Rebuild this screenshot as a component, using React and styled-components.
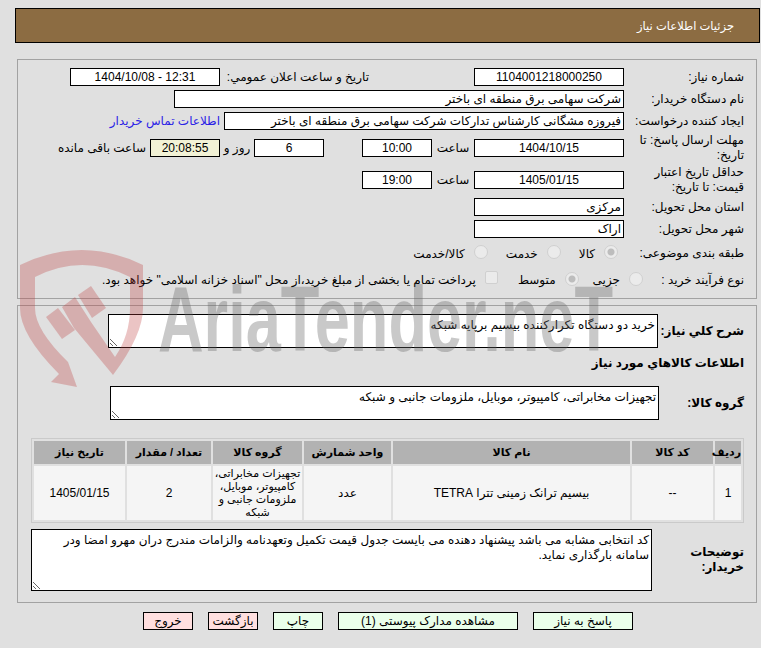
import React from "react";
import styled, { createGlobalStyle } from "styled-components";

const GlobalStyle = createGlobalStyle`
  html, body {
    margin: 0;
    padding: 0;
    background: #e0e0e0;
  }
  body {
    font-family: "Liberation Sans", "DejaVu Sans", sans-serif;
    font-size: 12px;
    color: #000;
    overflow: hidden;
  }
`;

const Page = styled.div`
  position: relative;
  width: 761px;
  height: 648px;
  padding-top: 8px;
  box-sizing: border-box;
  direction: rtl;
`;

const Header = styled.div`
  box-sizing: border-box;
  width: 745px;
  height: 35px;
  margin-right: 1px;
  padding-right: 25px;
  display: flex;
  align-items: center;
  background: #8c6c42;
  border: 1px solid #000;
  color: #fff;
  font-size: 11.5px;
`;

const Panel = styled.div`
  box-sizing: border-box;
  width: 740px;
  margin-right: 4px;
  margin-top: ${(p) => p.$top}px;
  height: ${(p) => p.$height}px;
  padding: ${(p) => p.$pad}px 12px 0 0;
  border: 1px solid #a2a2a2;
`;

const Row = styled.div`
  display: flex;
  align-items: center;
  height: ${(p) => p.$h || 22}px;
  margin-top: ${(p) => p.$top || 0}px;
`;

const Label = styled.div`
  flex: none;
  box-sizing: border-box;
  width: ${(p) => p.$w || 120}px;
  margin-right: ${(p) => p.$mr || 0}px;
  line-height: 15px;
  font-weight: ${(p) => (p.$bold ? 700 : 400)};
`;

const Unit = styled.div`
  flex: none;
  width: ${(p) => p.$w}px;
  margin-right: ${(p) => p.$mr || 0}px;
  text-align: center;
`;

const Field = styled.input`
  flex: none;
  box-sizing: border-box;
  width: ${(p) => p.$w}px;
  height: 18px;
  margin: 0 ${(p) => p.$mr || 0}px 0 0;
  padding: 0 2px;
  border: 1px solid #000;
  border-radius: 0;
  outline: none;
  background: ${(p) => p.$bg || "#fff"};
  color: #000;
  font: 12px "Liberation Sans", "DejaVu Sans", sans-serif;
  text-align: ${(p) => (p.$center ? "center" : "right")};
`;

const ContactLink = styled.a`
  margin-right: 4px;
  color: #2a22e6;
  text-decoration: none;
`;

const Options = styled.div`
  display: flex;
  align-items: center;
  gap: ${(p) => p.$gap ?? 18}px;
  padding-right: ${(p) => p.$pad ?? 6}px;
`;

const Option = styled.label`
  display: flex;
  align-items: center;
  gap: 9px;
`;

const Radio = styled.input.attrs({ type: "radio", disabled: true })`
  appearance: none;
  flex: none;
  width: 14px;
  height: 14px;
  margin: -3px 0 0;
  border: 1px solid #d0d0d0;
  border-radius: 50%;
  background: #ebebeb;
  &:checked {
    background: radial-gradient(circle, #bdbdbd 0 3px, #ebebeb 4px);
  }
`;

const Check = styled.input.attrs({ type: "checkbox", disabled: true })`
  appearance: none;
  flex: none;
  width: 13px;
  height: 13px;
  margin: -5px 6px 0 0;
  border: 1px solid #d0d0d0;
  border-radius: 2px;
  background: #ebebeb;
`;

const Notes = styled.textarea`
  display: block;
  flex: none;
  box-sizing: border-box;
  width: ${(p) => p.$w}px;
  height: ${(p) => p.$h}px;
  margin: 0;
  padding: 3px 2px 0;
  border: 1px solid #000;
  border-radius: 0;
  outline: none;
  background: #fff;
  color: #000;
  font: 12px/15px "Liberation Sans", "DejaVu Sans", sans-serif;
`;

const Section = styled.div`
  margin-top: ${(p) => p.$top}px;
  height: ${(p) => p.$h}px;
  display: flex;
  align-items: center;
  font-weight: 700;
`;

const Table = styled.table`
  width: 713px;
  margin-top: 18px;
  table-layout: fixed;
  border-collapse: separate;
  border-spacing: 2px;
  border: 1px solid #cacaca;
  box-sizing: border-box;
  font-size: 12px;
`;

const HeadCell = styled.th`
  box-sizing: border-box;
  width: ${(p) => p.$w}px;
  height: 23px;
  padding: 0;
  background: #b2b2b2;
  font-size: 11px;
  font-weight: 700;
  text-align: center;
`;

const Cell = styled.td`
  box-sizing: border-box;
  height: 54px;
  padding: 0;
  background: #f5f5f5;
  font-size: ${(p) => (p.$small ? 11 : 12)}px;
  line-height: 13px;
  text-align: center;
`;

const Actions = styled.div`
  display: flex;
  gap: 15px;
  margin-top: 9px;
  padding-right: 128px;
`;

const ActionButton = styled.button`
  box-sizing: border-box;
  width: ${(p) => p.$w}px;
  height: 18px;
  padding: 0;
  border: 1px solid #000;
  border-radius: 0;
  background: ${(p) => (p.$danger ? "#ffdfdf" : "#eaffea")};
  color: #000;
  font: 12px "Liberation Sans", "DejaVu Sans", sans-serif;
`;

const Watermark = styled.svg`
  position: absolute;
  top: 0;
  left: 0;
  pointer-events: none;
  direction: ltr;
`;

const WatermarkWord = styled.text`
  font-family: "Liberation Sans Narrow", "Liberation Sans", sans-serif;
  font-weight: 700;
  font-size: 92px;
  fill: rgba(100, 100, 100, 0.35);
`;

const columns = [
  { title: "ردیف", w: 26 },
  { title: "کد کالا", w: 81 },
  { title: "نام کالا", w: 237 },
  { title: "واحد شمارش", w: 87 },
  { title: "گروه کالا", w: 89 },
  { title: "تعداد / مقدار", w: 84 },
  { title: "تاریخ نیاز", w: 91 },
];

const cells = [
  "1",
  "--",
  "بیسیم ترانک زمینی تترا TETRA",
  "عدد",
  "تجهیزات مخابراتی، کامپیوتر، موبایل، ملزومات جانبی و شبکه",
  "2",
  "1405/01/15",
];

export default function App() {
  return (
    <Page>
      <GlobalStyle />
      <Header>جزئیات اطلاعات نیاز</Header>

      <Panel $top={16} $height={240} $pad={6}>
        <Row>
          <Label>شماره نیاز:</Label>
          <Field $w={150} $center readOnly value="1104001218000250" />
          <Label $w={149} $mr={105}>تاریخ و ساعت اعلان عمومي:</Label>
          <Field $w={150} $center readOnly value="12:31 - 1404/10/08" />
        </Row>
        <Row>
          <Label>نام دستگاه خریدار:</Label>
          <Field $w={450} readOnly value="شرکت سهامی برق منطقه ای باختر" />
        </Row>
        <Row>
          <Label>ایجاد کننده درخواست:</Label>
          <Field $w={400} readOnly value="فیروزه مشگانی کارشناس تدارکات شرکت سهامی برق منطقه ای باختر" />
          <ContactLink href="#">اطلاعات تماس خریدار</ContactLink>
        </Row>
        <Row $h={32}>
          <Label>مهلت ارسال پاسخ: تا تاریخ:</Label>
          <Field $w={150} $center readOnly value="1404/10/15" />
          <Unit $w={42}>ساعت</Unit>
          <Field $w={70} $center readOnly value="10:00" />
          <Field $w={70} $mr={38} $center readOnly value="6" />
          <Unit $w={34}>روز و</Unit>
          <Field $w={70} $center $bg="#f2f2d6" readOnly value="20:08:55" />
          <Label $w={94} $mr={4}>ساعت باقی مانده</Label>
        </Row>
        <Row $h={32}>
          <Label>حداقل تاریخ اعتبار قیمت: تا تاریخ:</Label>
          <Field $w={150} $center readOnly value="1405/01/15" />
          <Unit $w={42}>ساعت</Unit>
          <Field $w={70} $center readOnly value="19:00" />
        </Row>
        <Row>
          <Label>استان محل تحویل:</Label>
          <Field $w={150} readOnly value="مرکزی" />
        </Row>
        <Row>
          <Label>شهر محل تحویل:</Label>
          <Field $w={150} readOnly value="اراک" />
        </Row>
        <Row $h={27}>
          <Label>طبقه بندی موضوعی:</Label>
          <Options>
            <Option><Radio name="kind" defaultChecked />کالا</Option>
            <Option><Radio name="kind" />خدمت</Option>
            <Option><Radio name="kind" />کالا/خدمت</Option>
          </Options>
        </Row>
        <Row $h={26}>
          <Label $w={101}>نوع فرآیند خرید :</Label>
          <Options $pad={0} $gap={14}>
            <Option><Radio name="process" />جزیی</Option>
            <Option><Radio name="process" defaultChecked />متوسط</Option>
            <Option><Check />پرداخت تمام یا بخشی از مبلغ خرید،از محل "اسناد خزانه اسلامی" خواهد بود.</Option>
          </Options>
        </Row>
      </Panel>

      <Panel $top={6} $height={298} $pad={8}>
        <Row $h={34}>
          <Label $w={86} $bold>شرح کلي نياز:</Label>
          <Notes $w={550} $h={34} readOnly defaultValue="خرید دو دستگاه تکرارکننده بیسیم برپایه شبکه" />
        </Row>
        <Section $top={6} $h={18}>اطلاعات کالاهاي مورد نياز</Section>
        <Row $h={34} $top={14}>
          <Label $w={85} $bold>گروه کالا:</Label>
          <Notes $w={549} $h={34} readOnly defaultValue="تجهیزات مخابراتی، کامپیوتر، موبایل، ملزومات جانبی و شبکه" />
        </Row>
        <Table>
          <thead>
            <tr>
              {columns.map((c) => (
                <HeadCell key={c.title} $w={c.w}>{c.title}</HeadCell>
              ))}
            </tr>
          </thead>
          <tbody>
            <tr>
              {cells.map((c, i) => (
                <Cell key={i} $small={i === 4}>{c}</Cell>
              ))}
            </tr>
          </tbody>
        </Table>
        <Row $h={62} $top={6}>
          <Label $w={92} $bold>توضیحات خریدار:</Label>
          <Notes
            $w={621}
            $h={62}
            readOnly
            defaultValue="کد انتخابی مشابه می باشد پیشنهاد دهنده می بایست جدول قیمت تکمیل وتعهدنامه والزامات مندرج دران مهرو امضا ودر سامانه بارگذاری نماید."
          />
        </Row>
      </Panel>

      <Actions>
        <ActionButton $w={100}>پاسخ به نیاز</ActionButton>
        <ActionButton $w={180}>مشاهده مدارک پیوستی (1)</ActionButton>
        <ActionButton $w={50}>چاپ</ActionButton>
        <ActionButton $w={50} $danger>بازگشت</ActionButton>
        <ActionButton $w={50} $danger>خروج</ActionButton>
      </Actions>

      <Watermark width="761" height="648" viewBox="0 0 761 648">
        <g fill="rgba(190, 60, 60, 0.3)">
          <path d="M20 265 Q82 235 143 265 L143 308 Q143 335 113 375 L74 328 L62 307 L75 297 L91 322 L115 357 Q130 335 130 308 L130 277 Q82 253 35 277 L35 308 Q35 330 68 362 L77 387 L51 382 L59 374 Q20 335 20 308 Z" />
          <path d="M46 317 L58 308 L75 330 L62 339 Z" />
          <path d="M78 295 L91 286 L106 308 L92 318 Z" />
        </g>
        <WatermarkWord x="158" y="351" textLength="455" lengthAdjust="spacingAndGlyphs">AriaTender.neT</WatermarkWord>
      </Watermark>
    </Page>
  );
}
